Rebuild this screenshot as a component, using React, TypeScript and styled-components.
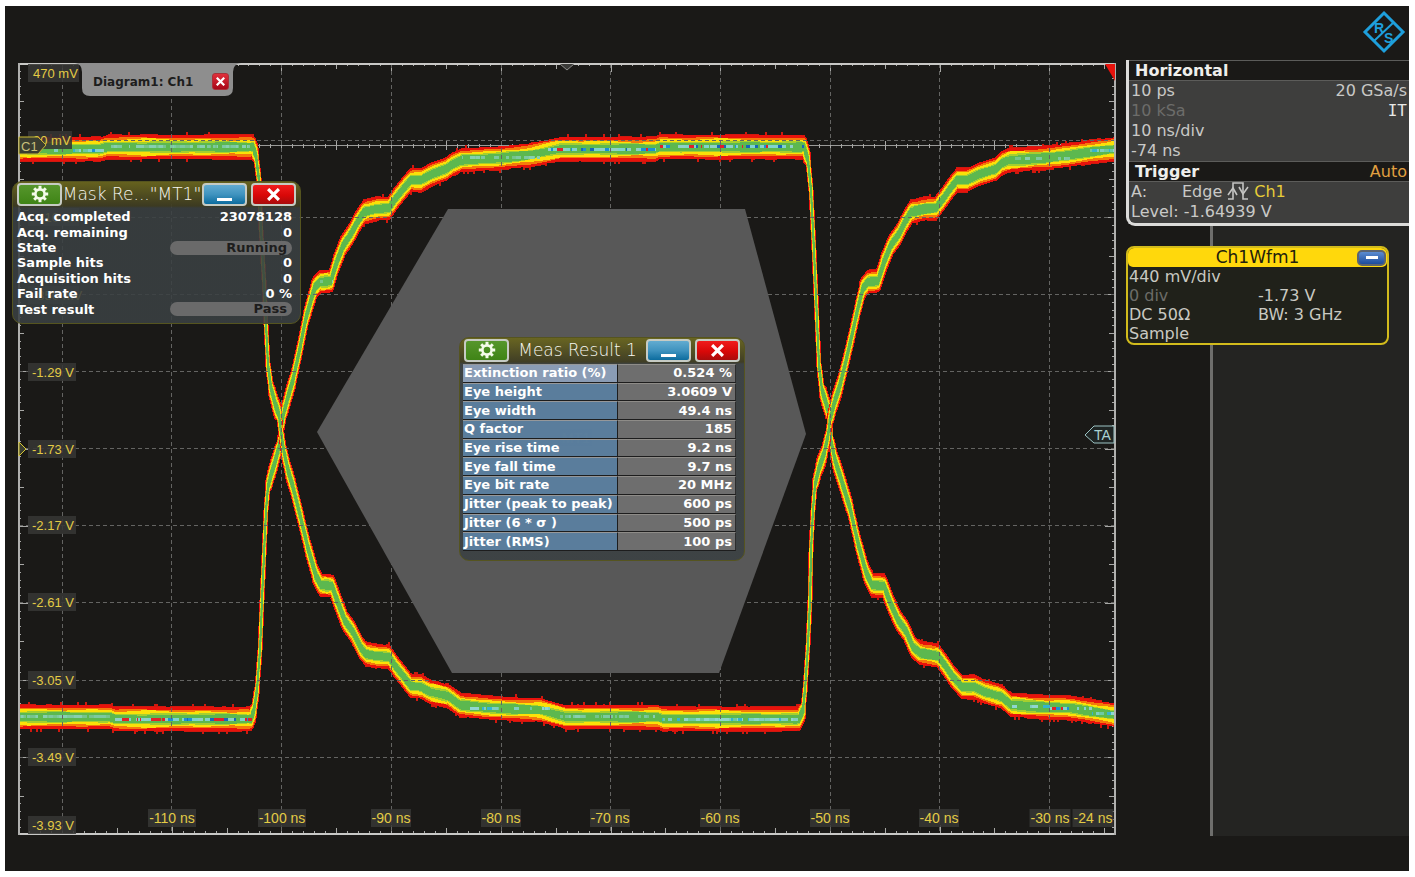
import React from 'react';
import styled, { createGlobalStyle, css } from 'styled-components';

const GlobalStyle = createGlobalStyle`
  *, *::before, *::after { box-sizing: border-box; }
  body { margin: 0; background: #fff; font-family: "DejaVu Sans", Verdana, sans-serif; }
  h1, h2, h3, p, dl, dt, dd { margin: 0; font-weight: inherit; font-size: inherit; }
  button { font: inherit; cursor: pointer; }
`;

/* ---------- waveform geometry ---------- */

type Point = [number, number];

const TRACE_A: Point[] = [
  [19, 149], [100, 149], [107, 147], [253, 147], [256, 156], [259, 180], [261, 230], [264, 280], [266, 325],
  [268, 365], [271, 388], [275, 403], [279, 415], [281, 432], [284, 452], [288, 470], [293, 487], [300, 515],
  [308, 548], [316, 576], [321, 585], [332, 586], [337, 600], [345, 621], [353, 632], [361, 648], [366, 654],
  [376, 656], [389, 657], [396, 667], [404, 677], [411, 686], [421, 687], [430, 692], [448, 696], [460, 705],
  [490, 708], [540, 710], [566, 717], [658, 717], [663, 719], [799, 719], [803, 710], [805, 690], [808, 645],
  [810, 600], [811, 550], [813, 510], [815, 485], [819, 468], [824, 454], [828, 436], [830, 420], [834, 404],
  [840, 385], [845, 365], [852, 335], [858, 308], [863, 288], [868, 282], [878, 281], [884, 262], [891, 245],
  [899, 234], [905, 222], [911, 212], [924, 209], [936, 208], [943, 199], [950, 189], [957, 180], [967, 180],
  [980, 174], [996, 169], [1002, 163], [1010, 160], [1045, 158], [1070, 155], [1090, 152], [1114, 149],
];

const TRACE_B: Point[] = [
  [19, 717], [110, 717], [115, 719], [251, 719], [254, 710], [257, 690], [260, 650], [262, 600], [264, 555],
  [266, 510], [268, 487], [271, 475], [275, 462], [279, 447], [281, 430], [284, 412], [288, 397], [293, 380],
  [300, 348], [306, 318], [311, 300], [315, 287], [320, 282], [331, 281], [336, 264], [343, 246], [351, 234],
  [358, 221], [364, 212], [376, 209], [389, 208], [396, 198], [404, 188], [411, 180], [421, 180], [432, 174],
  [446, 169], [453, 164], [462, 160], [500, 158], [530, 155], [560, 149], [655, 149], [660, 147], [804, 147],
  [808, 160], [811, 190], [814, 250], [817, 320], [819, 365], [822, 390], [826, 403], [830, 416], [831, 440],
  [835, 460], [842, 482], [850, 508], [858, 543], [866, 572], [872, 585], [884, 586], [890, 602], [898, 620],
  [906, 631], [913, 647], [920, 653], [938, 656], [944, 664], [953, 677], [962, 687], [974, 687], [985, 692],
  [1002, 697], [1011, 705], [1040, 707], [1070, 708], [1095, 712], [1114, 715],
];

const random = (seed: number) => {
  let s = seed;
  return () => {
    s = (s * 16807) % 2147483647;
    return s / 2147483647;
  };
};

interface Sample { x: number; y: number; nx: number; ny: number; jitter: number; noise: number }

function sampleTrace(points: Point[]): Sample[] {
  const dense: Point[] = [];
  for (let i = 0; i < points.length - 1; i++) {
    const [x0, y0] = points[i];
    const [x1, y1] = points[i + 1];
    const steps = Math.max(1, Math.round(Math.hypot(x1 - x0, y1 - y0) / 2));
    for (let k = 0; k < steps; k++) {
      dense.push([x0 + ((x1 - x0) * k) / steps, y0 + ((y1 - y0) * k) / steps]);
    }
  }
  dense.push(points[points.length - 1]);
  return dense.map(([x, y], i) => {
    const a = dense[Math.max(0, i - 2)];
    const b = dense[Math.min(dense.length - 1, i + 2)];
    const length = Math.hypot(b[0] - a[0], b[1] - a[1]) || 1;
    const cos = (b[0] - a[0]) / length;
    const spread = Math.min(1, Math.max(0, (cos - 0.07) / 0.25));
    return { x, y, nx: -(b[1] - a[1]) / length, ny: cos, jitter: 2.5 + 1.8 * spread, noise: 3 + 8.6 * Math.sqrt(spread) };
  });
}

/* Outline swept by a noise ellipse: time jitter across, voltage noise up and down. */
function bandPath(samples: Sample[], scale: number, ripple: number) {
  const upper: string[] = [];
  const lower: string[] = [];
  samples.forEach(({ x, y, nx, ny, jitter, noise }) => {
    const wave = ny > 0.95 ? ripple * Math.sin(x / 13 + scale * 9) * Math.sin(x / 31) : 0;
    const a = jitter * scale;
    const b = noise * scale + wave;
    const norm = Math.hypot(a * nx, b * ny) || 1;
    const dx = (a * a * nx) / norm;
    const dy = (b * b * ny) / norm;
    upper.push(`${(x - dx).toFixed(1)},${(y - dy).toFixed(1)}`);
    lower.push(`${(x + dx).toFixed(1)},${(y + dy).toFixed(1)}`);
  });
  return `M${upper.join('L')}L${lower.reverse().join('L')}Z`;
}

/* Ragged outer rim: runs of an extra row with a few single spikes. */
function fringePath(samples: Sample[], seed: number) {
  const next = random(seed);
  let d = '';
  let up = 0;
  let down = 0;
  samples.forEach(({ x, y, ny, noise }) => {
    if (next() < 0.16) up = next() < 0.5 ? 0 : 1;
    if (next() < 0.16) down = next() < 0.5 ? 0 : 1;
    if (ny < 0.8) return;
    const spikeUp = next() < 0.1 ? 3 : 0;
    const spikeDown = next() < 0.1 ? 3 : 0;
    d += `M${x.toFixed(0)},${(y - noise - Math.max(up, spikeUp)).toFixed(0)}V${(y + noise + Math.max(down, spikeDown)).toFixed(0)}`;
  });
  return d;
}

const LAYERS: { scale: number; color: string; ripple: number }[] = [
  { scale: 1, color: '#e8120c', ripple: 0 },
  { scale: 0.8, color: '#f57a0a', ripple: 0.6 },
  { scale: 0.65, color: '#fbe108', ripple: 1.2 },
  { scale: 0.47, color: '#a5cf2e', ripple: 1 },
  { scale: 0.36, color: '#5cb84f', ripple: 0.7 },
];

interface Sparkle { from: number; to: number; y: number; colors: string[]; density: number }

const MIXED = ['#1b8fd8', '#e0202a', '#7fd3cf', '#1765b8', '#8fd0c8', '#7fd3cf'];
const COOL = ['#7fcfc0', '#8fd6d0', '#6cc9a4', '#35b4cf'];
const MINT = ['#7cc9a0', '#74c48c', '#86cfb0'];

const SPARKLES: Sparkle[] = [
  { from: 44, to: 88, y: 150, colors: COOL, density: 0.5 },
  { from: 88, to: 104, y: 150, colors: MIXED, density: 0.9 },
  { from: 106, to: 250, y: 146, colors: MINT, density: 0.8 },
  { from: 320, to: 333, y: 281, colors: MINT, density: 0.6 },
  { from: 462, to: 550, y: 157, colors: MINT, density: 0.5 },
  { from: 548, to: 656, y: 149, colors: MIXED, density: 0.85 },
  { from: 660, to: 804, y: 146, colors: MIXED, density: 0.75 },
  { from: 20, to: 110, y: 716, colors: MINT, density: 0.9 },
  { from: 115, to: 252, y: 719, colors: MIXED, density: 0.8 },
  { from: 470, to: 550, y: 708, colors: COOL, density: 0.6 },
  { from: 560, to: 658, y: 716, colors: MINT, density: 0.7 },
  { from: 662, to: 800, y: 719, colors: COOL, density: 0.85 },
  { from: 1012, to: 1050, y: 706, colors: COOL, density: 0.7 },
  { from: 1050, to: 1092, y: 708, colors: MIXED, density: 0.7 },
  { from: 1092, to: 1114, y: 713, colors: COOL, density: 0.5 },
  { from: 1090, to: 1114, y: 150, colors: COOL, density: 0.8 },
  { from: 1012, to: 1080, y: 158, colors: MINT, density: 0.5 },
];

const VERTICALS = [62, 171, 281, 391, 501, 610, 720, 830, 939, 1049];
const HORIZONTALS = [140, 217, 294, 371, 448, 525, 602, 680, 757];

const Y_LABELS: { text: string; y: number }[] = [
  { text: '470 mV', y: 73 }, { text: '30 mV', y: 140 }, { text: '-410 mV', y: 217 }, { text: '-850 mV', y: 295 },
  { text: '-1.29 V', y: 372 }, { text: '-1.73 V', y: 449 }, { text: '-2.17 V', y: 525 }, { text: '-2.61 V', y: 602 },
  { text: '-3.05 V', y: 680 }, { text: '-3.49 V', y: 757 }, { text: '-3.93 V', y: 825 },
];

const X_LABELS: { text: string; x: number; w: number }[] = [
  { text: '-110 ns', x: 172, w: 48 }, { text: '-100 ns', x: 282, w: 48 }, { text: '-90 ns', x: 391, w: 40 },
  { text: '-80 ns', x: 501, w: 40 }, { text: '-70 ns', x: 610, w: 40 }, { text: '-60 ns', x: 720, w: 40 },
  { text: '-50 ns', x: 830, w: 40 }, { text: '-40 ns', x: 939, w: 40 }, { text: '-30 ns', x: 1050, w: 41 },
  { text: '-24 ns', x: 1093, w: 41 },
];

function tickPath() {
  let d = '';
  const step = 109.7 / 10;
  for (let k = -3; ; k++) {
    const x = Math.round(62 + k * step);
    if (x > 1113) break;
    if (x < 20) continue;
    const major = k % 10 === 0;
    const mid = Math.abs(k) % 5 === 0;
    const edge = major ? 8 : mid ? 5 : 2;
    d += `M${x},64v${edge}M${x},833v${-edge}`;
    d += mid ? `M${x},141v9` : `M${x},144v4`;
  }
  for (let k = -9; ; k++) {
    const y = Math.round(140 + k * 7.715);
    if (y > 832) break;
    if (y < 65) continue;
    const edge = k % 10 === 0 ? 9 : k % 5 === 0 ? 5 : 2;
    d += `M19,${y}h${edge}M1114,${y}h${-edge}`;
  }
  return d;
}

function Trace({ points, seed }: { points: Point[]; seed: number }) {
  const samples = sampleTrace(points);
  return (
    <g>
      <path d={fringePath(samples, seed)} stroke="#d0180e" strokeWidth={2} />
      {LAYERS.map((layer) => (
        <path key={layer.color} d={bandPath(samples, layer.scale, layer.ripple)} fill={layer.color} />
      ))}
    </g>
  );
}

function Sparkles() {
  const next = random(4711);
  const cells: React.ReactElement[] = [];
  SPARKLES.forEach(({ from, to, y, colors, density }, row) => {
    let x = from;
    while (x < to) {
      const width = 1 + Math.floor(next() * 5);
      if (next() < density) {
        const color = colors[Math.floor(next() * colors.length)];
        cells.push(<rect key={`${row}-${x}`} x={x} y={y - 1} width={Math.min(width, to - x)} height={3} fill={color} />);
      }
      x += width;
    }
  });
  return <g>{cells}</g>;
}

const ChartSvg = styled.svg`
  display: block;
  width: 100%;
  height: auto;
  font-family: "Liberation Sans", Arial, sans-serif;
`;

function Chart() {
  return (
    <ChartSvg viewBox="16 60 1102 776" role="img" aria-label="Eye diagram of channel 1">
      <g shapeRendering="crispEdges" fill="none">
        <path d="M19,145.5H1114" stroke="#9a9a98" />
        <path d={tickPath()} stroke="#a8a8a6" />
        <Trace points={TRACE_B} seed={97} />
        <Trace points={TRACE_A} seed={1234} />
        <Sparkles />
        <path
          d={VERTICALS.map((x) => `M${x + 0.5},64V833`).join('') + HORIZONTALS.map((y) => `M19,${y + 0.5}H1114`).join('')}
          stroke="#646462"
          strokeDasharray="4 3"
        />
      </g>
      <polygon points="448,209 745,209 806,434 719,673 452,673 317,432" fill="#585858" />
      <g shapeRendering="crispEdges" fill="none">
        <path d="M18,63.5H1116M18,834H1116" stroke="#c8c8c6" strokeWidth={2} />
        <path d="M19,63V835M1115,63V835" stroke="#b0b0ae" strokeWidth={2} />
      </g>
      <polygon points="1105,64 1115,64 1115,81" fill="#e8120c" />
      <path d="M560,64L567,70L574,64" fill="#3a3a38" stroke="#8d8d8b" />

      {Y_LABELS.map(({ text, y }) => (
        <g key={text}>
          <rect x={28} y={y - 9} width={text === '30 mV' ? 44 : text.endsWith('mV') ? 51 : 48} height={18} fill="#363634" fillOpacity={0.88} />
          <text x={text.endsWith('mV') ? 33 : 32} y={y + 5} fontSize={13} fill="#e3cb45">{text}</text>
        </g>
      ))}
      {X_LABELS.map(({ text, x, w }) => (
        <g key={text}>
          <rect x={x - w / 2} y={809} width={w} height={18} fill="#363634" fillOpacity={0.88} />
          <text x={x} y={823} fontSize={14} fill="#e3cb45" textAnchor="middle">{text}</text>
        </g>
      ))}
      <rect x={560} y={429} width={32} height={17} fill="#222" />
      <text x={576} y={443} fontSize={14} fill="#e3cb45" textAnchor="middle">MT1</text>

      <path d="M19,137H38L46,145L38,154H19Z" fill="#3b3e30" stroke="#c9b832" />
      <text x={21} y={151} fontSize={13} fill="#c9c27c">C1</text>
      <path d="M19,442L26,449L19,456Z" fill="#3b3e30" stroke="#d8c832" />
      <path d="M1085,435L1094,426H1114V443H1094Z" fill="#1f2524" stroke="#9cc4c4" />
      <text x={1094} y={440} fontSize={14} fill="#a9d2d2">TA</text>
    </ChartSvg>
  );
}

/* ---------- icons ---------- */

function GearIcon() {
  return (
    <svg width="18" height="18" viewBox="-9 -9 18 18" fill="none" stroke="#f4fbe9">
      <circle r="4.6" strokeWidth="2.6" />
      {[0, 45, 90, 135, 180, 225, 270, 315].map((a) => (
        <path key={a} d="M0-5V-8.2" strokeWidth="3" transform={`rotate(${a})`} />
      ))}
    </svg>
  );
}

function CrossIcon({ size }: { size: number }) {
  return (
    <svg width={size} height={size} viewBox="0 0 12 12" fill="none" stroke="#fff" strokeWidth="3">
      <path d="M1 1L11 11M11 1L1 11" />
    </svg>
  );
}

function EdgeIcon() {
  return (
    <svg width="22" height="19" viewBox="0 0 22 19" fill="none" stroke="#c4c4c2" strokeWidth="1.6">
      <path d="M1 17H6V1H16V17H21" />
      <path d="M1 13L6 6L10 13" />
      <path d="M12 5L16 12L21 5" />
    </svg>
  );
}

function BrandLogo() {
  return (
    <svg width="44" height="44" viewBox="0 0 44 44" fill="none" stroke="#1e9fdc" strokeWidth="3" role="img" aria-label="R and S">
      <path d="M22 3L41 22L22 41L3 22Z" />
      <path d="M32 12L12 31" strokeWidth="2" />
      <g fill="#1e9fdc" stroke="none" fontFamily="Liberation Sans, Arial, sans-serif" fontSize="14" fontWeight="bold">
        <text x="12" y="23">R</text>
        <text x="22" y="33">S</text>
      </g>
    </svg>
  );
}

/* ---------- layout ---------- */

const Screen = styled.div`
  margin: 6px 6px 6px 5px;
  padding-bottom: 35px;
  background: #1a1917;
  color: #c9c9c7;
`;

const TopBar = styled.header`
  display: flex;
  justify-content: flex-end;
  align-items: flex-start;
  height: 54px;
  padding: 4px 3px 0 0;
`;

const Main = styled.main`
  display: flex;
  gap: 8px;
  padding-left: 11px;
`;

const PlotArea = styled.section`
  position: relative;
  flex: 1;
  min-width: 0;
`;

const Sidebar = styled.aside`
  display: flex;
  flex-direction: column;
  flex: 0 0 283px;
`;

/* ---------- diagram tab ---------- */

const TabBox = styled.div`
  position: absolute;
  left: 59px;
  top: 3px;
  display: flex;
  align-items: center;
  justify-content: space-between;
  width: 166px;
  height: 33px;
  padding: 4px 12px 0 18px;
  color: #1d1d1d;
  font-size: 12px;
  font-weight: bold;
`;

const TabShape = styled.svg`
  position: absolute;
  inset: 0;
`;

const TabTitle = styled.span`
  position: relative;
`;

const TabClose = styled.button`
  position: relative;
  display: grid;
  place-items: center;
  width: 17px;
  height: 17px;
  padding: 0;
  border: 1px solid #a8323a;
  border-radius: 3px;
  background: linear-gradient(#e0303c, #a80818);
`;

/* ---------- floating windows ---------- */

const Window = styled.section<{ $left: number; $top: number; $width: number; $height: number }>`
  position: absolute;
  left: ${(p) => p.$left}px;
  top: ${(p) => p.$top}px;
  width: ${(p) => p.$width}px;
  height: ${(p) => p.$height}px;
  padding: 0 4px;
  border: 1px solid #55541f;
  border-radius: 10px;
  background: linear-gradient(rgba(106, 102, 30, 0.94), rgba(62, 60, 34, 0.94) 24px, rgba(58, 64, 66, 0.88) 26px);
  color: #fff;
`;

const WindowBar = styled.div`
  display: flex;
  align-items: center;
  height: 24px;
`;

const WindowTitle = styled.h2`
  flex: 1;
  min-width: 0;
  color: #f8f8f2;
  font-size: 17px;
  font-weight: 200;
  line-height: 22px;
  text-align: center;
  white-space: nowrap;
`;

const tones = {
  green: css`background: linear-gradient(#56962c, #3f8416);`,
  blue: css`background: linear-gradient(#62abd0, #3f93bf 50%, #0c6c9e);`,
  red: css`background: linear-gradient(#f01c1c, #d80808 55%, #a80c0c);`,
};

const WindowButton = styled.button<{ $tone: keyof typeof tones }>`
  display: grid;
  place-items: center;
  flex: 0 0 45px;
  height: 23px;
  padding: 0;
  border: 2px solid #c6cbc4;
  border-radius: 4px;
  ${(p) => tones[p.$tone]}

  & + & {
    margin-left: 4px;
  }
`;

const MinimizeBar = styled.span`
  width: 15px;
  height: 3px;
  margin-top: 10px;
  background: #fff;
`;

function FloatingWindow(props: {
  title: string; left: number; top: number; width: number; height: number; children: React.ReactNode;
}) {
  return (
    <Window $left={props.left} $top={props.top} $width={props.width} $height={props.height}>
      <WindowBar>
        <WindowButton $tone="green" aria-label="Settings"><GearIcon /></WindowButton>
        <WindowTitle>{props.title}</WindowTitle>
        <WindowButton $tone="blue" aria-label="Minimize"><MinimizeBar /></WindowButton>
        <WindowButton $tone="red" aria-label="Close"><CrossIcon size={13} /></WindowButton>
      </WindowBar>
      {props.children}
    </Window>
  );
}

const MaskList = styled.dl`
  display: grid;
  grid-auto-rows: 1fr;
  height: 108px;
  margin-top: 3px;
  padding-right: 4px;
  font-size: 13px;
  font-weight: bold;
  line-height: 15px;
`;

const MaskRow = styled.div`
  display: flex;
  justify-content: space-between;
  align-items: center;
`;

const StatePill = styled.dd`
  width: 122px;
  height: 14px;
  padding-right: 5px;
  border-radius: 7px;
  background: #6a6a6a;
  color: #1d1d1d;
  line-height: 14px;
  text-align: right;
`;

const MASK_ROWS: { label: string; value: string; pill?: boolean }[] = [
  { label: 'Acq. completed', value: '23078128' },
  { label: 'Acq. remaining', value: '0' },
  { label: 'State', value: 'Running', pill: true },
  { label: 'Sample hits', value: '0' },
  { label: 'Acquisition hits', value: '0' },
  { label: 'Fail rate', value: '0 %' },
  { label: 'Test result', value: 'Pass', pill: true },
];

const MeasTable = styled.table`
  width: 273px;
  height: 187px;
  margin: 2px 0 0 -1px;
  table-layout: fixed;
  border-collapse: separate;
  border-spacing: 0;
  font-size: 13px;
  font-weight: bold;
  line-height: 16px;
  white-space: nowrap;
`;

const MeasLabel = styled.th<{ $selected: boolean }>`
  width: 155px;
  padding: 0 0 0 1px;
  border: solid;
  border-width: 1px 1px 1px 0;
  border-color: #96989a #1d1d1d #1d1d1d;
  background: ${(p) => (p.$selected ? 'rgba(142, 160, 186, 0.96)' : 'rgba(92, 130, 164, 0.92)')};
  text-align: left;
`;

const MeasValue = styled.td`
  padding: 0 3px 0 0;
  border: solid;
  border-width: 1px 1px 1px 0;
  border-color: #8e8c88 #2d2d2d #1d1d1d;
  background: #6e6e6e;
  text-align: right;
`;

const MEAS_ROWS: [string, string][] = [
  ['Extinction ratio (%)', '0.524 %'],
  ['Eye height', '3.0609 V'],
  ['Eye width', '49.4 ns'],
  ['Q factor', '185'],
  ['Eye rise time', '9.2 ns'],
  ['Eye fall time', '9.7 ns'],
  ['Eye bit rate', '20 MHz'],
  ['Jitter (peak to peak)', '600 ps'],
  ['Jitter (6 * σ )', '500 ps'],
  ['Jitter (RMS)', '100 ps'],
];

/* ---------- sidebar ---------- */

const SetupPanel = styled.section`
  padding-bottom: 1px;
  border-left: 3px solid #dcdcda;
  border-bottom: 3px solid #dcdcda;
  border-bottom-left-radius: 9px;
  background: #3e3e3d;
  font-size: 16px;
  line-height: 20px;
`;

const SetupHeading = styled.div`
  display: flex;
  justify-content: space-between;
  height: 21px;
  padding: 0 2px 0 6px;
  border-top: 1px solid #5c5c5a;
  border-bottom: 1px solid #5c5c5a;
  background: #1a1917;
`;

const SetupTitle = styled.h2`
  color: #eeeeec;
  font-weight: bold;
`;

const TriggerMode = styled.span`
  color: #e0a040;
`;

const SetupBlock = styled.div`
  padding: 0 2px;
`;

const SetupLine = styled.div<{ $dim?: boolean }>`
  display: flex;
  justify-content: space-between;
  height: 20px;
  color: ${(p) => (p.$dim ? '#6c6c6a' : '#c9c9c7')};
`;

const InterpolationTag = styled.span`
  color: #e8e8e6;
  font-family: "DejaVu Sans Mono", monospace;
`;

const TriggerLine = styled.div`
  display: grid;
  grid-template-columns: 46px auto 22px 1fr;
  column-gap: 5px;
  height: 20px;
`;

const ChannelName = styled.span`
  color: #e6cc38;
`;

const SignalRail = styled.section`
  flex: 1;
  padding-top: 20px;
  background: linear-gradient(to right, #1a1917 84px, #6e6e6c 84px 87px, #242422 87px);
`;

const WaveCard = styled.article`
  width: 263px;
  border: 2px solid #d2bb1c;
  border-radius: 8px;
  overflow: hidden;
  background: #20211a;
  font-size: 16px;
`;

const WaveHeader = styled.div`
  display: grid;
  grid-template-columns: 30px 1fr 30px;
  align-items: center;
  height: 19px;
  border-radius: 0 0 5px 5px;
  background: #ffd80c;
`;

const WaveTitle = styled.h3`
  grid-column: 2;
  color: #22200c;
  font-size: 17px;
  line-height: 19px;
  text-align: center;
`;

const WaveMinimize = styled.button`
  display: grid;
  place-items: center;
  width: 29px;
  height: 16px;
  padding: 0;
  border: 2px solid #5c6470;
  border-radius: 5px;
  background: linear-gradient(#5c8cd0, #1c4c9c);
`;

const WaveMinimizeBar = styled.span`
  width: 12px;
  height: 3px;
  background: #fff;
`;

const WaveValues = styled.div`
  display: grid;
  grid-template-columns: 129px 1fr;
  grid-auto-rows: 19px;
  padding-left: 1px;
  line-height: 20px;
`;

const WaveValue = styled.span<{ $dim?: boolean }>`
  color: ${(p) => (p.$dim ? '#6c6c68' : '#c9c9c2')};
`;

export default function App() {
  return (
    <>
      <GlobalStyle />
      <Screen>
        <TopBar><BrandLogo /></TopBar>
        <Main>
          <PlotArea>
            <Chart />
            <TabBox>
              <TabShape width="166" height="33" viewBox="0 0 166 33">
                <path d="M0 0H166Q158 1 158 9V25Q158 33 150 33H15Q7 33 7 25V9Q7 1 0 0Z" fill="#8e8e8e" />
              </TabShape>
              <TabTitle>Diagram1: Ch1</TabTitle>
              <TabClose aria-label="Close diagram"><CrossIcon size={9} /></TabClose>
            </TabBox>

            <FloatingWindow title={'Mask Re..."MT1"'} left={-4} top={121} width={289} height={143}>
              <MaskList>
                {MASK_ROWS.map((row) => (
                  <MaskRow key={row.label}>
                    <dt>{row.label}</dt>
                    {row.pill ? <StatePill>{row.value}</StatePill> : <dd>{row.value}</dd>}
                  </MaskRow>
                ))}
              </MaskList>
            </FloatingWindow>

            <FloatingWindow title="Meas Result 1" left={443} top={277} width={286} height={224}>
              <MeasTable>
                <tbody>
                  {MEAS_ROWS.map(([label, value], i) => (
                    <tr key={label}>
                      <MeasLabel scope="row" $selected={i === 0}>{label}</MeasLabel>
                      <MeasValue>{value}</MeasValue>
                    </tr>
                  ))}
                </tbody>
              </MeasTable>
            </FloatingWindow>
          </PlotArea>

          <Sidebar>
            <SetupPanel>
              <SetupHeading><SetupTitle>Horizontal</SetupTitle></SetupHeading>
              <SetupBlock>
                <SetupLine><span>10 ps</span><span>20 GSa/s</span></SetupLine>
                <SetupLine $dim><span>10 kSa</span><InterpolationTag>IT</InterpolationTag></SetupLine>
                <SetupLine>10 ns/div</SetupLine>
                <SetupLine>-74 ns</SetupLine>
              </SetupBlock>
              <SetupHeading><SetupTitle>Trigger</SetupTitle><TriggerMode>Auto</TriggerMode></SetupHeading>
              <SetupBlock>
                <TriggerLine>
                  <span>A:</span>
                  <span>Edge</span>
                  <EdgeIcon />
                  <ChannelName>Ch1</ChannelName>
                </TriggerLine>
                <SetupLine>Level: -1.64939 V</SetupLine>
              </SetupBlock>
            </SetupPanel>
            <SignalRail>
              <WaveCard>
                <WaveHeader>
                  <WaveTitle>Ch1Wfm1</WaveTitle>
                  <WaveMinimize aria-label="Minimize Ch1Wfm1"><WaveMinimizeBar /></WaveMinimize>
                </WaveHeader>
                <WaveValues>
                  <WaveValue>440 mV/div</WaveValue><span />
                  <WaveValue $dim>0 div</WaveValue><WaveValue>-1.73 V</WaveValue>
                  <WaveValue>DC 50Ω</WaveValue><WaveValue>BW: 3 GHz</WaveValue>
                  <WaveValue>Sample</WaveValue><span />
                </WaveValues>
              </WaveCard>
            </SignalRail>
          </Sidebar>
        </Main>
      </Screen>
    </>
  );
}
